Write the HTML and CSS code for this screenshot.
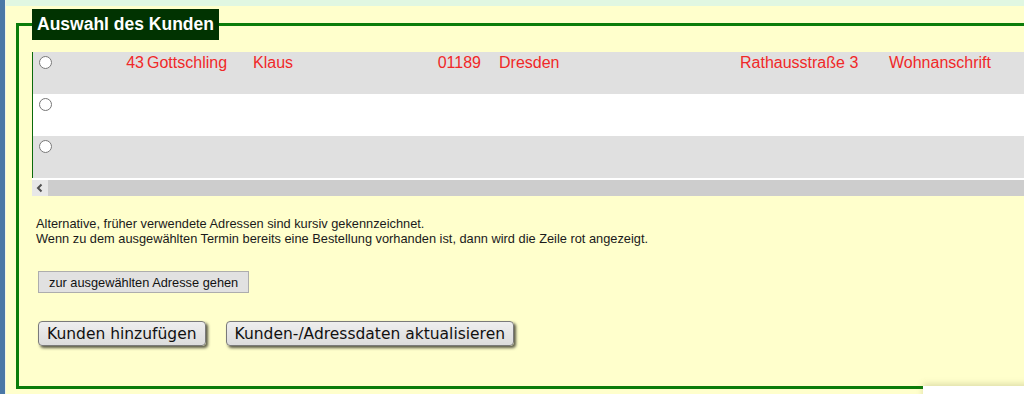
FILE: index.html
```html
<!DOCTYPE html>
<html lang="de">
<head>
<meta charset="utf-8">
<title>Auswahl des Kunden</title>
<link rel="stylesheet" href="styles.css">
</head>
<body>
<div class="page">
  <div class="side"></div>
  <div class="main">
    <div class="topbar"></div>
    <fieldset class="box">
      <legend class="box-title">Auswahl des Kunden</legend>
      <div class="table">
        <div class="rows">
          <label class="row row-alt row-taken">
            <span class="c-radio"><input type="radio" name="kunde"></span>
            <span class="c-id">43</span>
            <span class="c-name">Gottschling</span>
            <span class="c-first">Klaus</span>
            <span class="c-plz">01189</span>
            <span class="c-city">Dresden</span>
            <span class="c-street">Rathausstraße 3</span>
            <span class="c-type">Wohnanschrift</span>
          </label>
          <label class="row">
            <span class="c-radio"><input type="radio" name="kunde"></span>
          </label>
          <label class="row row-alt">
            <span class="c-radio"><input type="radio" name="kunde"></span>
          </label>
        </div>
        <div class="hscroll">
          <span class="hscroll-btn"><svg width="16" height="16" viewBox="0 0 16 16"><path d="M9.5 4.5 L6 8 L9.5 11.5" fill="none" stroke="#505050" stroke-width="2"/></svg></span>
          <span class="hscroll-track"></span>
        </div>
      </div>
      <p class="notes">Alternative, früher verwendete Adressen sind kursiv gekennzeichnet.<br>Wenn zu dem ausgewählten Termin bereits eine Bestellung vorhanden ist, dann wird die Zeile rot angezeigt.</p>
      <button class="btn-small" type="button">zur ausgewählten Adresse gehen</button>
      <div class="actions">
        <button class="btn-big" type="button">Kunden hinzufügen</button>
        <button class="btn-big" type="button">Kunden-/Adressdaten aktualisieren</button>
      </div>
    </fieldset>
  </div>
</div>
<div class="overlay-panel"></div>
</body>
</html>
```
FILE: styles.css
```css
html, body {
  margin: 0;
  padding: 0;
}
body {
  background: #ffffcc;
  font-family: "Liberation Sans", Arial, sans-serif;
  overflow: hidden;
  width: 1024px;
  height: 394px;
  position: relative;
}
.page {
  display: flex;
  min-height: 394px;
}
.side {
  width: 5px;
  flex: none;
  background: #4a78a6;
  border-right: 1px solid #eef3e6;
}
.main {
  flex: 1;
  min-width: 0;
}
.topbar {
  height: 6px;
  background: #e0f7e2;
}
.box {
  margin: 3px 0 0 10px;
  width: 1100px;
  box-sizing: border-box;
  border: 3px solid #0a7c0a;
  padding: 12px 0 40px 13px;
  min-inline-size: 0;
}
.box-title {
  background: #013301;
  color: #ffffff;
  font-weight: bold;
  font-size: 17.5px;
  line-height: 21px;
  padding: 5px 5px;
}
.table {
  width: 1080px;
}
.rows {
  border-left: 1px solid #0b6a0b;
}
.row {
  display: grid;
  grid-template-columns: 27px 84px 109px 147px 81px 259px 149px 1fr;
  height: 42px;
  background: #ffffff;
  align-items: start;
  font-size: 16px;
  line-height: 18px;
}
.row-alt {
  background: #e0e0e0;
}
.row-taken {
  color: #f02828;
}
.row > span {
  padding-top: 2px;
  white-space: nowrap;
}
.c-radio input {
  margin: 2px 0 0 6px;
  width: 13px;
  height: 13px;
}
.c-id, .c-plz {
  text-align: right;
}
.c-name {
  padding-left: 3px;
}
.c-city {
  padding-left: 18px;
}
.hscroll {
  display: flex;
  height: 16px;
  border-top: 2px solid #ffffff;
  background: #cdcdcd;
}
.hscroll-btn {
  width: 16px;
  height: 16px;
  background: #e8e8e8;
  display: flex;
}
.hscroll-track {
  flex: 1;
}
.notes {
  margin: 20px 0 0 4px;
  font-size: 12.8px;
  line-height: 15px;
  color: #1a1a1a;
}
.btn-small {
  display: block;
  margin: 25px 0 0 6px;
  height: 22px;
  padding: 0 10px;
  background: #e1e1e1;
  border: 1px solid #adadad;
  border-radius: 0;
  font-family: "Liberation Sans", Arial, sans-serif;
  font-size: 12.8px;
  color: #111111;
}
.actions {
  display: flex;
  gap: 20px;
  margin: 28px 0 0 6px;
}
.btn-big {
  height: 25px;
  padding: 0 8px;
  background: linear-gradient(#eeeeee, #dcdcdc);
  border: 1px solid #7a7a7a;
  border-radius: 4px;
  box-shadow: 2px 2px 3px rgba(0, 0, 0, 0.65);
  font-family: "DejaVu Sans", Verdana, sans-serif;
  font-size: 15.5px;
  color: #111111;
}
.overlay-panel {
  position: absolute;
  left: 923px;
  top: 386px;
  width: 120px;
  height: 20px;
  background: #ffffff;
  box-shadow: 0 -2px 6px rgba(120, 120, 60, 0.25);
}
```
